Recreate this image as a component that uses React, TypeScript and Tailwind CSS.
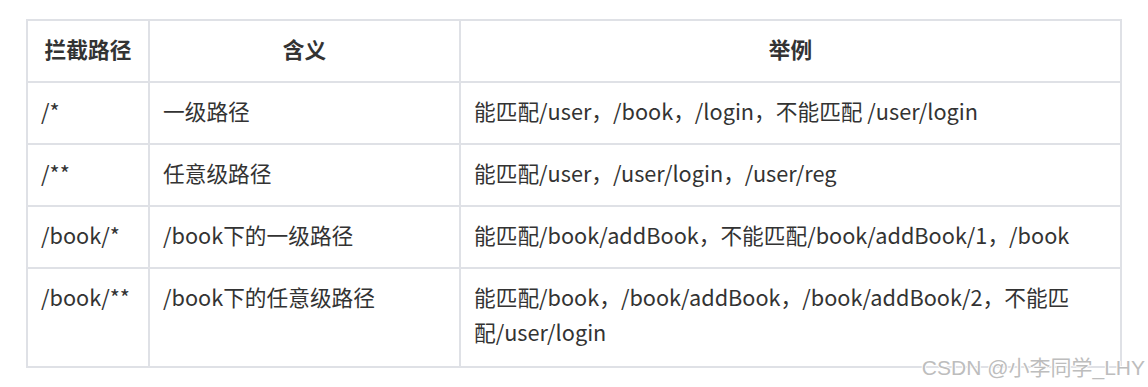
import React from 'react';

const rows: [string, string, string][] = [
    ['/*', '一级路径', '能匹配/user，/book，/login，不能匹配 /user/login'],
    ['/**', '任意级路径', '能匹配/user，/user/login，/user/reg'],
    ['/book/*', '/book下的一级路径', '能匹配/book/addBook，不能匹配/book/addBook/1，/book'],
    ['/book/**', '/book下的任意级路径', '能匹配/book，/book/addBook，/book/addBook/2，不能匹配/user/login'],
];

const cell = 'border-2 border-[#dfe1e6] px-[13px] pt-[10px] pb-[15px] align-top';

export default function App() {
    return (
        <div
            className="relative w-[1148px] h-[387px] bg-white pl-[26px] pt-[19px] text-[#333333]"
            style={{ fontFamily: '"Noto Sans CJK SC", "Noto Sans", sans-serif' }}
        >
            <table className="table-fixed w-[1096px] border-collapse text-[21.7px] leading-[35px]">
                <thead>
                    <tr>
                        <th className={`${cell} w-[122px] font-bold text-center`}>拦截路径</th>
                        <th className={`${cell} w-[311px] font-bold text-center`}>含义</th>
                        <th className={`${cell} font-bold text-center`}>举例</th>
                    </tr>
                </thead>
                <tbody>
                    {rows.map(([path, meaning, example], i) => {
                        const last = i === rows.length - 1 ? 'pb-[17px]' : '';
                        return (
                            <tr key={path}>
                                <td className={`${cell} ${last}`}>{path}</td>
                                <td className={`${cell} ${last}`}>{meaning}</td>
                                <td className={`${cell} ${last} pr-[40px]`}>{example}</td>
                            </tr>
                        );
                    })}
                </tbody>
            </table>
            <div
                className="absolute right-[3px] bottom-[9px] text-[21px] leading-none text-[#bdbdbd]"
                style={{
                    fontFamily: '"Liberation Sans", "Noto Sans CJK SC", sans-serif',
                    textShadow: '1px 0 #fff, -1px 0 #fff, 0 1px #fff, 0 -1px #fff',
                }}
            >
                CSDN @小李同学_LHY
            </div>
        </div>
    );
}
